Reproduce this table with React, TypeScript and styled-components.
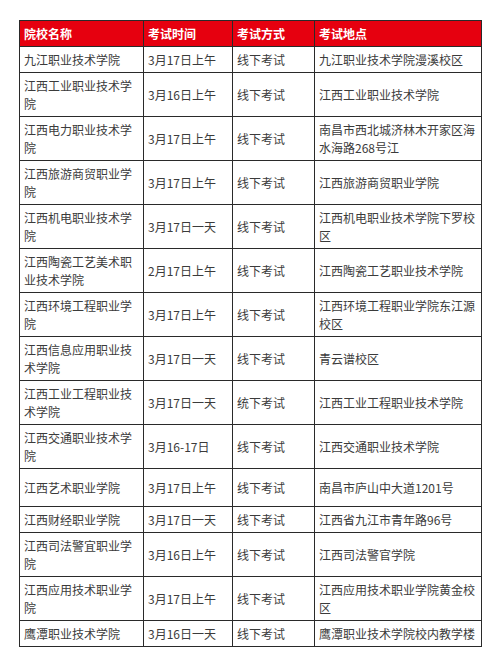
import styled, { createGlobalStyle } from 'styled-components';

const GlobalStyle = createGlobalStyle`
  html, body {
    margin: 0;
    padding: 0;
    background: #fff;
  }
  body {
    font-family: "Noto Sans CJK SC", "Noto Sans", sans-serif;
  }
`;

const Page = styled.div`
  padding: 20px 0 0 19px;
  width: 500px;
  height: 654px;
  box-sizing: border-box;
`;

const Table = styled.table`
  border-collapse: collapse;
  table-layout: fixed;
  width: 462px;
  font-size: 12px;
  line-height: 18px;
  color: #3b3b3b;
`;

const HeadCell = styled.th`
  background: #e6000f;
  color: #fff;
  font-weight: 700;
  text-align: left;
  padding: 4px 4px 3px;
  border: 1px solid #2a2a2a;
`;

const Row = styled.tr<{ $tall?: boolean }>`
  height: ${(p) => (p.$tall ? '38px' : 'auto')};
`;

const Cell = styled.td`
  padding: 4px 4px 3px;
  border: 1px solid #2a2a2a;
  vertical-align: middle;
  word-break: break-all;
`;

type Item = {
  name: string;
  time: string;
  mode: string;
  place: string;
  tall?: boolean;
};

const rows: Item[] = [
  { name: '九江职业技术学院', time: '3月17日上午', mode: '线下考试', place: '九江职业技术学院漫溪校区' },
  { name: '江西工业职业技术学院', time: '3月16日上午', mode: '线下考试', place: '江西工业职业技术学院' },
  { name: '江西电力职业技术学院', time: '3月17日上午', mode: '线下考试', place: '南昌市西北城济林木开家区海水海路268号江' },
  { name: '江西旅游商贸职业学院', time: '3月17日上午', mode: '线下考试', place: '江西旅游商贸职业学院' },
  { name: '江西机电职业技术学院', time: '3月17日一天', mode: '线下考试', place: '江西机电职业技术学院下罗校区' },
  { name: '江西陶瓷工艺美术职业技术学院', time: '2月17日上午', mode: '线下考试', place: '江西陶瓷工艺职业技术学院' },
  { name: '江西环境工程职业学院', time: '3月17日上午', mode: '线下考试', place: '江西环境工程职业学院东江源校区' },
  { name: '江西信息应用职业技术学院', time: '3月17日一天', mode: '线下考试', place: '青云谱校区' },
  { name: '江西工业工程职业技术学院', time: '3月17日一天', mode: '统下考试', place: '江西工业工程职业技术学院' },
  { name: '江西交通职业技术学院', time: '3月16-17日', mode: '线下考试', place: '江西交通职业技术学院' },
  { name: '江西艺术职业学院', time: '3月17日上午', mode: '线下考试', place: '南昌市庐山中大道1201号', tall: true },
  { name: '江西财经职业学院', time: '3月17日一天', mode: '线下考试', place: '江西省九江市青年路96号' },
  { name: '江西司法警宜职业学院', time: '3月16日上午', mode: '线下考试', place: '江西司法警官学院' },
  { name: '江西应用技术职业学院', time: '3月17日上午', mode: '线下考试', place: '江西应用技术职业学院黄金校区' },
  { name: '鹰潭职业技术学院', time: '3月16日一天', mode: '线下考试', place: '鹰潭职业技术学院校内教学楼' },
];

export default function App() {
  return (
    <Page>
      <GlobalStyle />
      <Table>
        <colgroup>
          <col style={{ width: 124 }} />
          <col style={{ width: 89 }} />
          <col style={{ width: 82 }} />
          <col style={{ width: 167 }} />
        </colgroup>
        <thead>
          <tr>
            <HeadCell>院校名称</HeadCell>
            <HeadCell>考试时间</HeadCell>
            <HeadCell>考试方式</HeadCell>
            <HeadCell>考试地点</HeadCell>
          </tr>
        </thead>
        <tbody>
          {rows.map((r) => (
            <Row key={r.name} $tall={r.tall}>
              <Cell>{r.name}</Cell>
              <Cell>{r.time}</Cell>
              <Cell>{r.mode}</Cell>
              <Cell>{r.place}</Cell>
            </Row>
          ))}
        </tbody>
      </Table>
    </Page>
  );
}
